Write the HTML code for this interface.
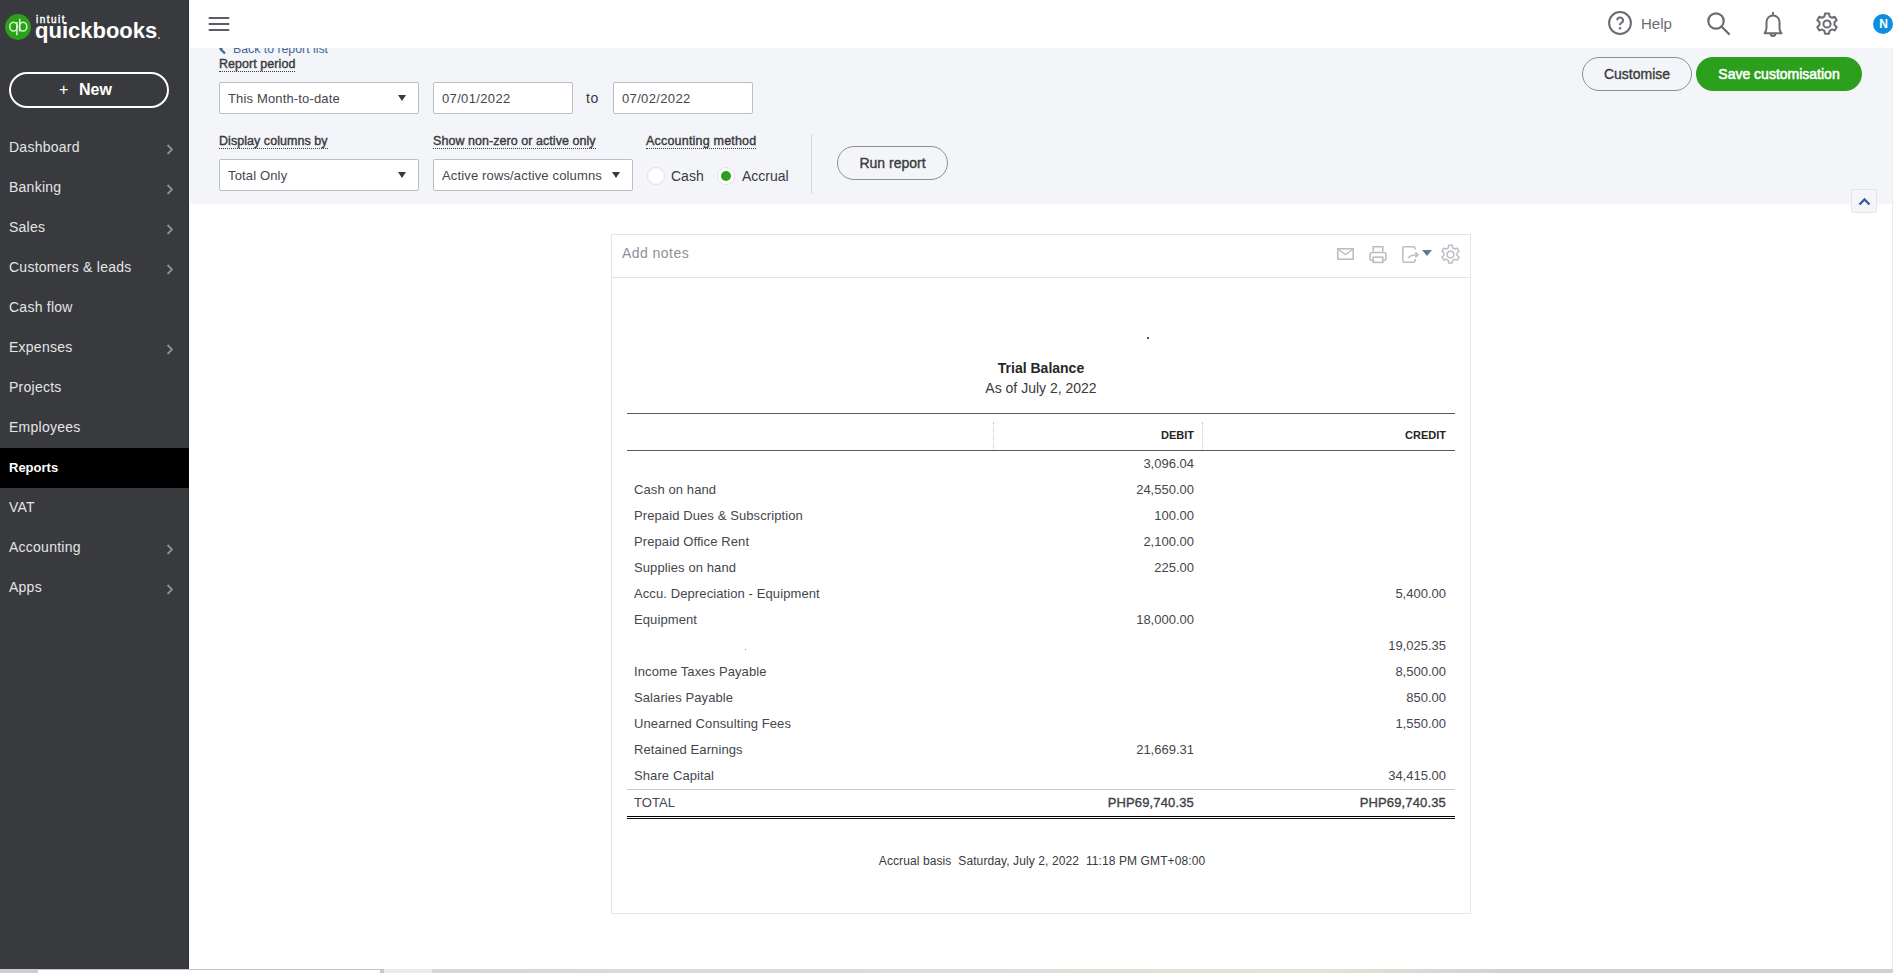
<!DOCTYPE html>
<html><head><meta charset="utf-8">
<style>
*{box-sizing:border-box;margin:0;padding:0}
html,body{width:1893px;height:973px;overflow:hidden;background:#fff;font-family:"Liberation Sans",sans-serif;color:#393a3d}
.abs{position:absolute;white-space:nowrap}
#side{position:absolute;left:0;top:0;width:189px;height:969px;background:#393a3d;border-right:1px solid #303134}
#side .item{position:absolute;left:0;width:189px;height:40px;color:#e4e5e7;font-size:14px;line-height:38px;padding-left:9px;white-space:nowrap;letter-spacing:0.25px}
#side .item.sel{background:#000;color:#fff;font-weight:bold;font-size:13px;letter-spacing:0}
#side .chev{position:absolute;left:166px;top:16px}
#side .item.sel{line-height:39px}
#top{position:absolute;left:189px;top:0;width:1704px;height:48px;background:#fff}
#filt{position:absolute;left:190px;top:48px;width:1703px;height:156px;background:#f4f5f8}
.lbl{position:absolute;font-size:12.5px;font-weight:normal;-webkit-text-stroke:0.4px #393a3d;color:#393a3d;line-height:14px;white-space:nowrap;letter-spacing:0.05px}
.lbl:after{content:"";position:absolute;left:0;right:0;top:14px;border-bottom:1px dotted #393a3d}
.box{position:absolute;height:32px;background:#fff;border:1px solid #babec5;border-radius:2px;font-size:13px;line-height:30px;padding-top:1px;padding-left:8px;letter-spacing:0.15px;color:#45464b;white-space:nowrap}
.caret{position:absolute;margin-top:-1px;width:0;height:0;border-left:4px solid transparent;border-right:4px solid transparent;border-top:6px solid #393a3d}
.btn{position:absolute;border-radius:17px;height:34px;line-height:32px;padding-top:1px;font-size:13px;font-weight:bold;text-align:center;white-space:nowrap}
#card{position:absolute;left:611px;top:234px;width:860px;height:680px;border:1px solid #e3e5e8;background:#fff}
.lab{position:absolute;left:634px;font-size:13px;color:#45464b;white-space:nowrap;line-height:16px;letter-spacing:0.1px}
.num{position:absolute;font-size:13px;color:#45464b;text-align:right;white-space:nowrap;line-height:16px;width:120px}
.d{left:1074px}
.c{left:1326px}
</style></head>
<body>
<div id="side">
  <svg class="abs" style="left:5px;top:14px" width="26" height="26" viewBox="0 0 26 26">
    <circle cx="13" cy="13" r="12.9" fill="#2ca01c"/>
    <ellipse cx="8.5" cy="12.7" rx="3.7" ry="4.4" stroke="#d9f8cc" stroke-width="1.5" fill="none"/>
    <ellipse cx="18.1" cy="12.7" rx="3.7" ry="4.4" stroke="#d9f8cc" stroke-width="1.5" fill="none"/>
    <path d="M11.9 8 V21.2 M14.7 4.8 V17.4" stroke="#d9f8cc" stroke-width="1.5" fill="none"/>
  </svg>
  <div class="abs" style="left:36px;top:12.6px;color:#fff;font-size:10px;font-weight:normal;-webkit-text-stroke:0.4px #fff;letter-spacing:1.5px;line-height:13px">intuit</div><div class="abs" style="left:158px;top:37px;width:1.5px;height:1.5px;border-radius:1px;background:#bbb"></div>
  <div class="abs" style="left:35px;top:18px;color:#fff;font-size:22px;font-weight:bold;line-height:26px">quickbooks</div>
  <div class="abs" style="left:9px;top:72px;width:160px;height:36px;border:2px solid #fff;border-radius:18px;color:#fff;font-size:16px;font-weight:bold;line-height:32px"><span class="abs" style="left:48px;top:0;font-weight:normal">+</span><span class="abs" style="left:68px;top:0">New</span></div>
  <div class="item" style="top:128px">Dashboard<svg class="chev" width="8" height="11" viewBox="0 0 8 11"><path d="M1.5 1 L6 5.5 L1.5 10" stroke="#8d9096" stroke-width="1.8" fill="none"/></svg></div>
  <div class="item" style="top:168px">Banking<svg class="chev" width="8" height="11" viewBox="0 0 8 11"><path d="M1.5 1 L6 5.5 L1.5 10" stroke="#8d9096" stroke-width="1.8" fill="none"/></svg></div>
  <div class="item" style="top:208px">Sales<svg class="chev" width="8" height="11" viewBox="0 0 8 11"><path d="M1.5 1 L6 5.5 L1.5 10" stroke="#8d9096" stroke-width="1.8" fill="none"/></svg></div>
  <div class="item" style="top:248px">Customers &amp; leads<svg class="chev" width="8" height="11" viewBox="0 0 8 11"><path d="M1.5 1 L6 5.5 L1.5 10" stroke="#8d9096" stroke-width="1.8" fill="none"/></svg></div>
  <div class="item" style="top:288px">Cash flow</div>
  <div class="item" style="top:328px">Expenses<svg class="chev" width="8" height="11" viewBox="0 0 8 11"><path d="M1.5 1 L6 5.5 L1.5 10" stroke="#8d9096" stroke-width="1.8" fill="none"/></svg></div>
  <div class="item" style="top:368px">Projects</div>
  <div class="item" style="top:408px">Employees</div>
  <div class="item sel" style="top:448px">Reports</div>
  <div class="item" style="top:488px">VAT</div>
  <div class="item" style="top:528px">Accounting<svg class="chev" width="8" height="11" viewBox="0 0 8 11"><path d="M1.5 1 L6 5.5 L1.5 10" stroke="#8d9096" stroke-width="1.8" fill="none"/></svg></div>
  <div class="item" style="top:568px">Apps<svg class="chev" width="8" height="11" viewBox="0 0 8 11"><path d="M1.5 1 L6 5.5 L1.5 10" stroke="#8d9096" stroke-width="1.8" fill="none"/></svg></div>
</div>
<div class="abs" style="left:0;top:969px;width:1893px;height:4px;background:linear-gradient(90deg,#d2d2d2 0,#d6dadc 600px,#e2e4d6 1320px,#d2d2d2 1500px)"></div>
<div class="abs" style="left:0;top:969px;width:38px;height:4px;background:#cdcdcd"></div>
<div class="abs" style="left:38px;top:969px;width:342px;height:4px;background:#fff;border-top:1px solid #c4c4c4"></div>
<div class="abs" style="left:380px;top:969px;width:4px;height:4px;background:#c8c8c8"></div>
<div class="abs" style="left:384px;top:969px;width:48px;height:4px;background:#ebebeb"></div>

<div id="filt">
</div>
<svg class="abs" style="left:218px;top:43px" width="10" height="12" viewBox="0 0 10 12"><path d="M7 1.5 L2.5 6 L7 10.5" stroke="#41679a" stroke-width="2.2" fill="none"/></svg><div class="abs" style="left:233px;top:42.2px;font-size:12.3px;color:#41679a;line-height:14px">Back to report list</div>
<div id="top">
  <svg class="abs" style="left:19px;top:16px" width="22" height="16" viewBox="0 0 22 16"><path d="M1.5 2 H20.5 M1.5 8 H20.5 M1.5 14 H20.5" stroke="#5c5d62" stroke-width="2" stroke-linecap="round"/></svg>
  <!-- help -->
  <svg class="abs" style="left:1418px;top:10px" width="26" height="26" viewBox="0 0 26 26"><circle cx="13" cy="13" r="10.9" stroke="#6b6c72" stroke-width="2" fill="none"/><path d="M10.2 10.3 a2.9 2.9 0 1 1 4.2 2.6 c-1.1 0.6 -1.4 1.1 -1.4 2.4" stroke="#6b6c72" stroke-width="2" fill="none"/><circle cx="13" cy="18.3" r="1.2" fill="#6b6c72"/></svg>
  <div class="abs" style="left:1452px;top:15px;font-size:15px;color:#6b6c72;line-height:17px">Help</div>
  <svg class="abs" style="left:1516px;top:10px" width="26" height="27" viewBox="0 0 26 27"><circle cx="11" cy="11" r="7.7" stroke="#6b6c72" stroke-width="2.2" fill="none"/><path d="M16.5 16.5 L24 24" stroke="#6b6c72" stroke-width="2.2" stroke-linecap="round"/></svg>
  <svg class="abs" style="left:1572px;top:11px" width="24" height="28" viewBox="0 0 24 28"><path d="M12 1.8 V3.4 M3.6 22.2 c1.3 -1.3 1.9 -3.2 1.9 -5.6 V11 a6.5 6.5 0 0 1 13 0 V16.6 c0 2.4 0.6 4.3 1.9 5.6 z M9.7 22.8 a2.3 2.3 0 0 0 4.6 0" stroke="#6b6c72" stroke-width="2" fill="none" stroke-linecap="round" stroke-linejoin="round"/></svg>
  <svg class="abs" style="left:1626px;top:12px" width="24" height="24" viewBox="0 0 24 24"><path d="M10 1.5 h4 l0.6 3 a7.8 7.8 0 0 1 2.2 1.3 l2.9 -1 l2 3.5 l-2.3 2 a7.8 7.8 0 0 1 0 2.6 l2.3 2 l-2 3.5 l-2.9 -1 a7.8 7.8 0 0 1 -2.2 1.3 l-0.6 3 h-4 l-0.6 -3 a7.8 7.8 0 0 1 -2.2 -1.3 l-2.9 1 l-2 -3.5 l2.3 -2 a7.8 7.8 0 0 1 0 -2.6 l-2.3 -2 l2 -3.5 l2.9 1 a7.8 7.8 0 0 1 2.2 -1.3 z" stroke="#6b6c72" stroke-width="2" fill="none" stroke-linejoin="round"/><circle cx="12" cy="12" r="3.6" stroke="#6b6c72" stroke-width="2" fill="none"/></svg>
  <div class="abs" style="left:1684px;top:14px;width:20px;height:20px;border-radius:10px;background:#0d8ee0;color:#fff;font-size:12px;font-weight:bold;line-height:20px;text-align:center;padding-left:1px">N</div>
</div>

<!-- filter controls -->

<div class="lbl" style="left:219px;top:57px">Report period</div>
<div class="box" style="left:219px;top:82px;width:200px">This Month-to-date<div class="caret" style="left:178px;top:13px"></div></div>
<div class="box" style="left:433px;top:82px;width:140px;letter-spacing:0.35px">07/01/2022</div>
<div class="abs" style="left:586px;top:90px;font-size:14px;line-height:16px;color:#393a3d;letter-spacing:0.5px">to</div>
<div class="box" style="left:613px;top:82px;width:140px;letter-spacing:0.35px">07/02/2022</div>

<div class="lbl" style="left:219px;top:134px">Display columns by</div>
<div class="box" style="left:219px;top:159px;width:200px">Total Only<div class="caret" style="left:178px;top:13px"></div></div>
<div class="lbl" style="left:433px;top:134px">Show non-zero or active only</div>
<div class="box" style="left:433px;top:159px;width:200px">Active rows/active columns<div class="caret" style="left:178px;top:13px"></div></div>
<div class="lbl" style="left:646px;top:134px;letter-spacing:0.2px">Accounting method</div>
<div class="abs" style="left:647px;top:167px;width:18px;height:18px;border-radius:9px;background:#fff;border:1px solid #e0e2e6"></div>
<div class="abs" style="left:671px;top:168px;font-size:14px;line-height:16px;color:#393a3d">Cash</div>
<div class="abs" style="left:717px;top:167px;width:18px;height:18px;border-radius:9px;background:#fff;border:1px solid #e0e2e6"><div class="abs" style="left:3px;top:3px;width:10px;height:10px;border-radius:5px;background:#2ca01c"></div></div>
<div class="abs" style="left:742px;top:168px;font-size:14px;line-height:16px;color:#393a3d">Accrual</div>
<div class="abs" style="left:811px;top:134px;width:1px;height:60px;background:#d4d7dc"></div>
<div class="btn" style="left:837px;top:146px;width:111px;border:1px solid #8d9096;color:#393a3d;font-size:14px;font-weight:normal;-webkit-text-stroke:0.35px #393a3d;padding-top:0">Run report</div>

<div class="btn" style="left:1582px;top:57px;width:110px;border:1px solid #8d9096;color:#393a3d;font-size:14px;font-weight:normal;-webkit-text-stroke:0.35px #393a3d;padding-top:0">Customise</div>
<div class="btn" style="left:1696px;top:57px;width:166px;background:#2ca01c;color:#fff;font-size:14px;font-weight:normal;-webkit-text-stroke:0.55px #fff">Save customisation</div>
<div class="abs" style="left:1851px;top:189px;width:26px;height:24px;background:#f4f5f8;border:1px solid #e3e5e8;border-radius:2px"><svg class="abs" style="left:6px;top:7px" width="13" height="9" viewBox="0 0 13 9"><path d="M1.5 7.5 L6.5 2.5 L11.5 7.5" stroke="#3f5a9c" stroke-width="2.4" fill="none"/></svg></div>
<div class="abs" style="left:1892px;top:48px;width:1px;height:921px;background:#ececec"></div>

<div id="card">
</div>
<div class="abs" style="left:622px;top:245px;font-size:14px;line-height:16px;color:#8d9096;letter-spacing:0.45px">Add notes</div>
<div class="abs" style="left:612px;top:277px;width:858px;height:1px;background:#e3e5e8"></div>
<svg class="abs" style="left:1336px;top:247px" width="19" height="14" viewBox="0 0 19 14"><rect x="1.8" y="1.8" width="15.4" height="10.4" stroke="#babec5" stroke-width="1.6" fill="none"/><path d="M2 2 L9.5 7.5 L17 2" stroke="#babec5" stroke-width="1.5" fill="none"/></svg>
<svg class="abs" style="left:1368px;top:245px" width="20" height="19" viewBox="0 0 20 19"><path d="M5.2 6.5 V1.8 H14.8 V6.5" stroke="#babec5" stroke-width="1.6" fill="none"/><rect x="2" y="7.5" width="16" height="8" rx="2.2" stroke="#babec5" stroke-width="1.6" fill="none"/><rect x="5.2" y="12.2" width="9.6" height="5.2" stroke="#babec5" stroke-width="1.6" fill="#fff"/></svg>
<svg class="abs" style="left:1401px;top:245px" width="20" height="19" viewBox="0 0 20 19"><path d="M14 4.5 V3.3 a1.5 1.5 0 0 0 -1.5 -1.5 H3.3 a1.5 1.5 0 0 0 -1.5 1.5 V15.7 a1.5 1.5 0 0 0 1.5 1.5 H12.5 a1.5 1.5 0 0 0 1.5 -1.5 V14" stroke="#babec5" stroke-width="1.6" fill="none"/><path d="M7.3 13.3 C8.5 10.5 11 9.8 16.5 9.8 M14.3 7.3 L17 9.8 L14.3 12.3" stroke="#babec5" stroke-width="1.6" fill="none"/></svg>
<svg class="abs" style="left:1422px;top:250px" width="10" height="6" viewBox="0 0 10 6"><path d="M0 0 H10 L5 6 z" fill="#5b7a95"/></svg>
<svg class="abs" style="left:1440px;top:244px" width="21" height="21" viewBox="0 0 24 24"><path d="M10 1.5 h4 l0.6 3 a7.8 7.8 0 0 1 2.2 1.3 l2.9 -1 l2 3.5 l-2.3 2 a7.8 7.8 0 0 1 0 2.6 l2.3 2 l-2 3.5 l-2.9 -1 a7.8 7.8 0 0 1 -2.2 1.3 l-0.6 3 h-4 l-0.6 -3 a7.8 7.8 0 0 1 -2.2 -1.3 l-2.9 1 l-2 -3.5 l2.3 -2 a7.8 7.8 0 0 1 0 -2.6 l-2.3 -2 l2 -3.5 l2.9 1 a7.8 7.8 0 0 1 2.2 -1.3 z" stroke="#babec5" stroke-width="1.7" fill="none" stroke-linejoin="round"/><circle cx="12" cy="12" r="3.8" stroke="#babec5" stroke-width="1.7" fill="none"/></svg>
<div class="abs" style="left:1147px;top:337px;width:2px;height:2px;background:#555"></div>
<div class="abs" style="left:611px;top:360px;width:860px;text-align:center;font-size:14px;font-weight:bold;line-height:16px;color:#262626">Trial Balance</div>
<div class="abs" style="left:611px;top:380px;width:860px;text-align:center;font-size:14px;line-height:16px;color:#393a3d">As of July 2, 2022</div>
<div class="abs" style="left:627px;top:413px;width:828px;height:1px;background:#5a5b60"></div>
<div class="abs" style="left:993px;top:422px;width:0;height:28px;border-left:1px dotted #c8c8c8"></div>
<div class="abs" style="left:1202px;top:422px;width:0;height:28px;border-left:1px dotted #c8c8c8"></div>
<div class="abs" style="left:1074px;top:428.7px;width:120px;text-align:right;font-size:11px;font-weight:bold;line-height:13px;color:#262626">DEBIT</div>
<div class="abs" style="left:1326px;top:428.7px;width:120px;text-align:right;font-size:11px;font-weight:bold;line-height:13px;color:#262626">CREDIT</div>
<div class="abs" style="left:627px;top:450px;width:828px;height:1px;background:#5a5b60"></div>
<div class="num d" style="top:456.3px">3,096.04</div>
<div class="lab" style="top:482.3px">Cash on hand</div>
<div class="num d" style="top:482.3px">24,550.00</div>
<div class="lab" style="top:508.3px">Prepaid Dues &amp; Subscription</div>
<div class="num d" style="top:508.3px">100.00</div>
<div class="lab" style="top:534.3px">Prepaid Office Rent</div>
<div class="num d" style="top:534.3px">2,100.00</div>
<div class="lab" style="top:560.3px">Supplies on hand</div>
<div class="num d" style="top:560.3px">225.00</div>
<div class="lab" style="top:586.3px">Accu. Depreciation - Equipment</div>
<div class="num c" style="top:586.3px">5,400.00</div>
<div class="lab" style="top:612.3px">Equipment</div>
<div class="num d" style="top:612.3px">18,000.00</div>
<div class="num c" style="top:638.3px">19,025.35</div>
<div class="lab" style="top:664.3px">Income Taxes Payable</div>
<div class="num c" style="top:664.3px">8,500.00</div>
<div class="lab" style="top:690.3px">Salaries Payable</div>
<div class="num c" style="top:690.3px">850.00</div>
<div class="lab" style="top:716.3px">Unearned Consulting Fees</div>
<div class="num c" style="top:716.3px">1,550.00</div>
<div class="lab" style="top:742.3px">Retained Earnings</div>
<div class="num d" style="top:742.3px">21,669.31</div>
<div class="lab" style="top:768.3px">Share Capital</div>
<div class="num c" style="top:768.3px">34,415.00</div>
<div class="abs" style="left:627px;top:789px;width:828px;height:1px;background:#c8c9cc"></div>
<div class="lab" style="top:794.7px">TOTAL</div>
<div class="num d" style="top:794.7px;-webkit-text-stroke:0.35px #393a3d;letter-spacing:0.15px">PHP69,740.35</div>
<div class="num c" style="top:794.7px;-webkit-text-stroke:0.35px #393a3d;letter-spacing:0.15px">PHP69,740.35</div>
<div class="abs" style="left:627px;top:816px;width:828px;height:1px;background:#000"></div>
<div class="abs" style="left:627px;top:818px;width:828px;height:1px;background:#111"></div>
<div class="abs" style="left:611px;top:853.5px;width:862px;text-align:center;font-size:12px;line-height:14px;color:#393a3d;white-space:pre;letter-spacing:0.1px">Accrual basis  Saturday, July 2, 2022  11:18 PM GMT+08:00</div>
<div class="abs" style="left:745px;top:649px;width:1px;height:1px;background:#999"></div>

</body></html>
